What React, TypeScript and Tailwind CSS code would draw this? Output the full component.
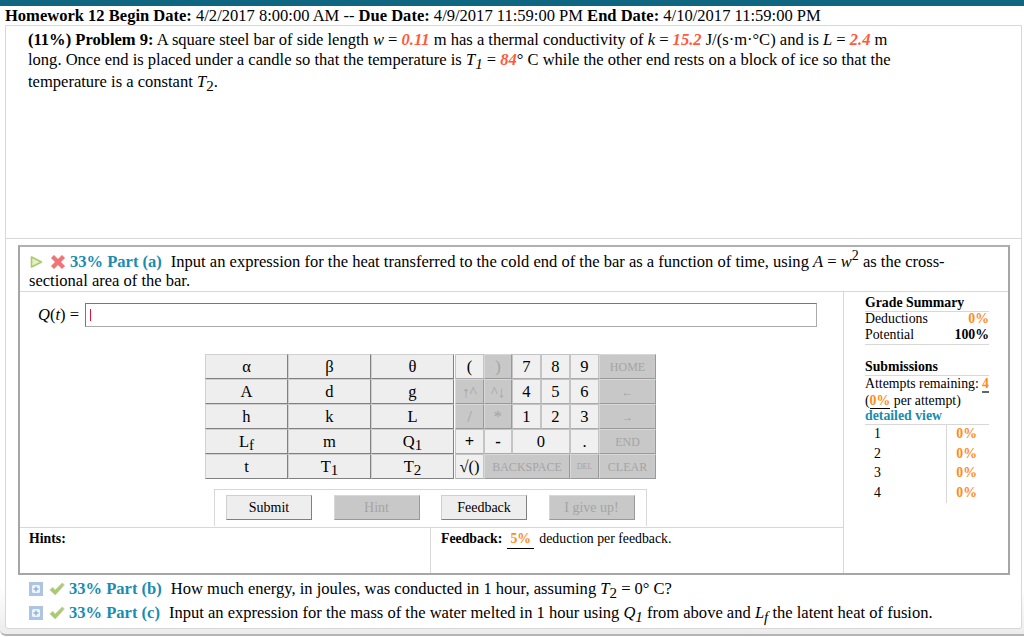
import type { ReactNode } from "react";

const keyBase = "flex items-center justify-center border";
const keyOn = `${keyBase} border-t-[#d0d0d0] border-l-[#d0d0d0] border-r-[#808080] border-b-[#808080] bg-[#eeeeee] text-black`;
const padOn = `${keyBase} border-[#c4c4c4] border-b-[#aaaaaa] bg-[#f0f0f0] text-black`;
const keyOff = `${keyBase} border-t-[#d8d8d8] border-l-[#d8d8d8] border-r-[#999999] border-b-[#999999] bg-[#c8c8c8] text-[#a4a4a4]`;
const btnOn = `${keyOn} h-[25px] w-[86px] border-r-[#666] border-b-[#666]`;
const btnOff = `${keyOff} h-[25px] w-[86px]`;

function Val({ children }: { children: ReactNode }) {
  return <b className="italic text-[#ff5a3c]">{children}</b>;
}

function Sub({ children }: { children: ReactNode }) {
  return <sub className="text-[15px]">{children}</sub>;
}

function PartLabel({ children }: { children: ReactNode }) {
  return <b className="text-[#1a8cb0]">{children}</b>;
}

function Expand() {
  return (
    <svg width="14" height="14" viewBox="0 0 14 14" className="shrink-0">
      <rect x="0.5" y="0.5" width="13" height="13" fill="#a9c6e6" stroke="#b4c4d8" />
      <rect x="3" y="3" width="8" height="8" rx="1.5" fill="#eef4fb" />
      <path d="M7 4.5v5M4.5 7h5" stroke="#8fb0d6" strokeWidth="1.4" />
    </svg>
  );
}

function Check() {
  return (
    <svg width="16" height="14" viewBox="0 0 16 14" className="shrink-0">
      <path d="M0.8 8l2.7-2.7 2.8 2.6 7-7 2 2-9 10.2z" fill="#a9cc6a" stroke="#c9cfba" strokeWidth="0.8" />
    </svg>
  );
}

const symbolKeys: ReactNode[] = [
  "α", "β", "θ",
  "A", "d", "g",
  "h", "k", "L",
  <>L<Sub>f</Sub></>, "m", <>Q<Sub>1</Sub></>,
  "t", <>T<Sub>1</Sub></>, <>T<Sub>2</Sub></>,
];

const attempts = [1, 2, 3, 4];

export default function App() {
  return (
    <div className="flex h-[637px] w-[1024px] flex-col overflow-hidden bg-white font-['Liberation_Serif',serif] text-[16.55px] leading-[20px] text-black">
      <div className="h-[6px] shrink-0 bg-[#0f6680]" />
      <div className="h-[19px] shrink-0 whitespace-nowrap pl-[5px] leading-[19px]">
        <b>Homework 12 Begin Date:</b> 4/2/2017 8:00:00 AM -- <b>Due Date:</b> 4/9/2017 11:59:00 PM <b>End Date:</b> 4/10/2017 11:59:00 PM
      </div>

      <div className="mb-[1px] flex min-h-0 flex-1 flex-col rounded-bl-[6px] border-b-2 border-[#b4b4b4] bg-gradient-to-b from-white from-[92%] to-[#ececec] pb-[5px]">
        <div className="ml-[5px] mr-[2px] flex min-h-0 flex-1 flex-col rounded-b-[3px] border border-[#d8d8d8] bg-white">
          {/* Problem statement */}
          <div className="h-[213px] shrink-0 border-b border-[#d8d8d8] pl-[22px] pt-[4px]">
            <div className="h-[20px] whitespace-nowrap">
              <b>(11%) Problem 9:</b> A square steel bar of side length <i>w</i> = <Val>0.11</Val> m has a thermal conductivity of <i>k</i> = <Val>15.2</Val> J/(s·m·°C) and is <i>L</i> = <Val>2.4</Val> m
            </div>
            <div className="h-[20px] whitespace-nowrap">
              long. Once end is placed under a candle so that the temperature is <i>T<Sub>1</Sub></i> = <Val>84</Val>° C while the other end rests on a block of ice so that the
            </div>
            <div className="mt-[2px] h-[20px] whitespace-nowrap">
              temperature is a constant <i>T</i><Sub>2</Sub>.
            </div>
          </div>

          {/* Part (a) */}
          <div className="ml-[12px] mr-[11px] mt-[6px] flex h-[330px] shrink-0 flex-col border-2 border-[#a6a6a6] border-t-[#b0b0b0]">
            <div className="h-[45px] shrink-0 border-b border-[#d8d8d8] pl-[10px] pt-[5px]">
              <div className="flex h-[20px] items-center whitespace-nowrap">
                <svg width="14" height="14" viewBox="0 0 14 14" className="mr-[6px] shrink-0">
                  <path d="M1.5 2l10 5-10 5z" fill="#e6f0c8" stroke="#a9cc6a" strokeWidth="1.6" strokeLinejoin="round" />
                </svg>
                <svg width="16" height="16" viewBox="0 0 16 16" className="mr-[4px] shrink-0">
                  <path d="M1 4l3-3 4 4 4-4 3 3-4 4 4 4-3 3-4-4-4 4-3-3 4-4z" fill="#f0757a" stroke="#f7b4b0" strokeWidth="0.8" />
                </svg>
                <PartLabel>33% Part (a)</PartLabel>
                <span className="ml-[9px]">
                  Input an expression for the heat transferred to the cold end of the bar as a function of time, using <i>A</i> = <i>w</i><sup className="text-[14px]">2</sup> as the cross-
                </span>
              </div>
              <div className="-ml-[1px] -mt-[1px]">sectional area of the bar.</div>
            </div>

            <div className="flex min-h-0 flex-1">
              {/* Answer area */}
              <div className="flex w-[823px] shrink-0 flex-col">
                <div className="h-[235px] shrink-0">
                  <div className="flex items-center pl-[18px] pt-[11px]">
                    <span className="w-[47px] whitespace-nowrap"><i>Q</i>(<i>t</i>) =</span>
                    <div className="flex h-[24px] w-[732px] items-center border border-[#aaa] border-l-[#777] border-t-[#777] pl-[4px]">
                      <div className="h-[12px] w-px bg-[#e0103c]" />
                    </div>
                  </div>

                  <div className="ml-[185px] mt-[27px] flex">
                    <div className="grid h-[125px] w-[249px] grid-cols-3 grid-rows-5">
                      {symbolKeys.map((k, i) => (
                        <div key={i} className={keyOn}>{k}</div>
                      ))}
                    </div>
                    <div className="ml-[1px] grid h-[125px] w-[201px] grid-cols-[29px_28px_29px_29px_29px_57px] grid-rows-5">
                      <div className={padOn}>(</div>
                      <div className={keyOff}>)</div>
                      <div className={padOn}>7</div>
                      <div className={padOn}>8</div>
                      <div className={padOn}>9</div>
                      <div className={`${keyOff} text-[12px]`}>HOME</div>

                      <div className={`${keyOff} text-[15px]`}>↑^</div>
                      <div className={`${keyOff} text-[15px]`}>^↓</div>
                      <div className={padOn}>4</div>
                      <div className={padOn}>5</div>
                      <div className={padOn}>6</div>
                      <div className={`${keyOff} text-[12px]`}>←</div>

                      <div className={keyOff}>/</div>
                      <div className={keyOff}>*</div>
                      <div className={padOn}>1</div>
                      <div className={padOn}>2</div>
                      <div className={padOn}>3</div>
                      <div className={`${keyOff} text-[12px]`}>→</div>

                      <div className={`${padOn} font-bold`}>+</div>
                      <div className={`${padOn} font-bold`}>-</div>
                      <div className={`${padOn} col-span-2`}>0</div>
                      <div className={padOn}>.</div>
                      <div className={`${keyOff} text-[12px]`}>END</div>

                      <div className={padOn}>√()</div>
                      <div className={`${keyOff} col-span-3 text-[12px]`}>BACKSPACE</div>
                      <div className={`${keyOff} text-[8px]`}>DEL</div>
                      <div className={`${keyOff} text-[12px]`}>CLEAR</div>
                    </div>
                  </div>

                  <div className="ml-[194px] mt-[10px] flex h-[37px] w-[433px] gap-[21.5px] border border-b-0 border-[#d8d8d8] pl-[11px] pt-[5px] text-[14px]">
                    <div className={btnOn}>Submit</div>
                    <div className={btnOff}>Hint</div>
                    <div className={btnOn}>Feedback</div>
                    <div className={btnOff}>I give up!</div>
                  </div>
                </div>

                <div className="flex min-h-0 flex-1 border-t border-[#d8d8d8] text-[13.8px]">
                  <div className="w-[411px] shrink-0 border-r border-[#d8d8d8] pl-[9px] pt-[1px]"><b>Hints:</b></div>
                  <div className="whitespace-nowrap pl-[10px] pt-[1px]">
                    <b>Feedback:</b>
                    <b className="mx-[5px] inline-block w-[27px] border-b border-black text-center leading-[18px] text-[#ff8c1a]">5%</b>
                    deduction per feedback.
                  </div>
                </div>
              </div>

              {/* Grade summary */}
              <div className="w-[167px] shrink-0 border-l border-[#d8d8d8] pl-[21px] pr-[21px] pt-[3px] text-[13.8px] leading-[16px]">
                <div className="border-b border-[#d8d8d8]"><b>Grade Summary</b></div>
                <div className="-mt-[1px] flex justify-between"><span>Deductions</span><b className="text-[#ff8c1a]">0%</b></div>
                <div className="flex justify-between border-b border-[#d8d8d8] pb-[1px]"><span>Potential</span><b>100%</b></div>
                <div className="mt-[14px] border-b border-[#d8d8d8]"><b>Submissions</b></div>
                <div className="flex justify-between whitespace-nowrap leading-[15px]">
                  <span>Attempts remaining:</span>
                  <b className="border-b-2 border-[#666] leading-[15px] text-[#ff8c1a]">4</b>
                </div>
                <div className="whitespace-nowrap leading-[15px]">
                  (<b className="border-b border-black text-[#ff8c1a]">0%</b> per attempt)
                </div>
                <div className="border-b border-[#d8d8d8] leading-[15.5px]"><b className="text-[#1a8cb0]">detailed view</b></div>
                {attempts.map((n) => (
                  <div key={n} className="flex h-[19.5px] items-stretch">
                    <span className="flex w-[81px] items-center pl-[9px]">{n}</span>
                    <span className="flex flex-1 items-center justify-end border-l border-[#d8d8d8] pr-[12px]">
                      <b className="text-[#ff8c1a]">0%</b>
                    </span>
                  </div>
                ))}
              </div>
            </div>
          </div>

          {/* Collapsed parts */}
          <div className="ml-[23px] mt-[2px] flex h-[24px] items-center whitespace-nowrap">
            <Expand />
            <span className="ml-[6px] flex"><Check /></span>
            <span className="ml-[4px]"><PartLabel>33% Part (b)</PartLabel></span>
            <span className="ml-[9px]">How much energy, in joules, was conducted in 1 hour, assuming <i>T</i><Sub>2</Sub> = 0° C?</span>
          </div>
          <div className="ml-[23px] flex h-[24px] items-center whitespace-nowrap">
            <Expand />
            <span className="ml-[6px] flex"><Check /></span>
            <span className="ml-[4px]"><PartLabel>33% Part (c)</PartLabel></span>
            <span className="ml-[9px]">Input an expression for the mass of the water melted in 1 hour using <i>Q<Sub>1</Sub></i> from above and <i>L<Sub>f</Sub></i> the latent heat of fusion.</span>
          </div>
        </div>
      </div>
    </div>
  );
}
